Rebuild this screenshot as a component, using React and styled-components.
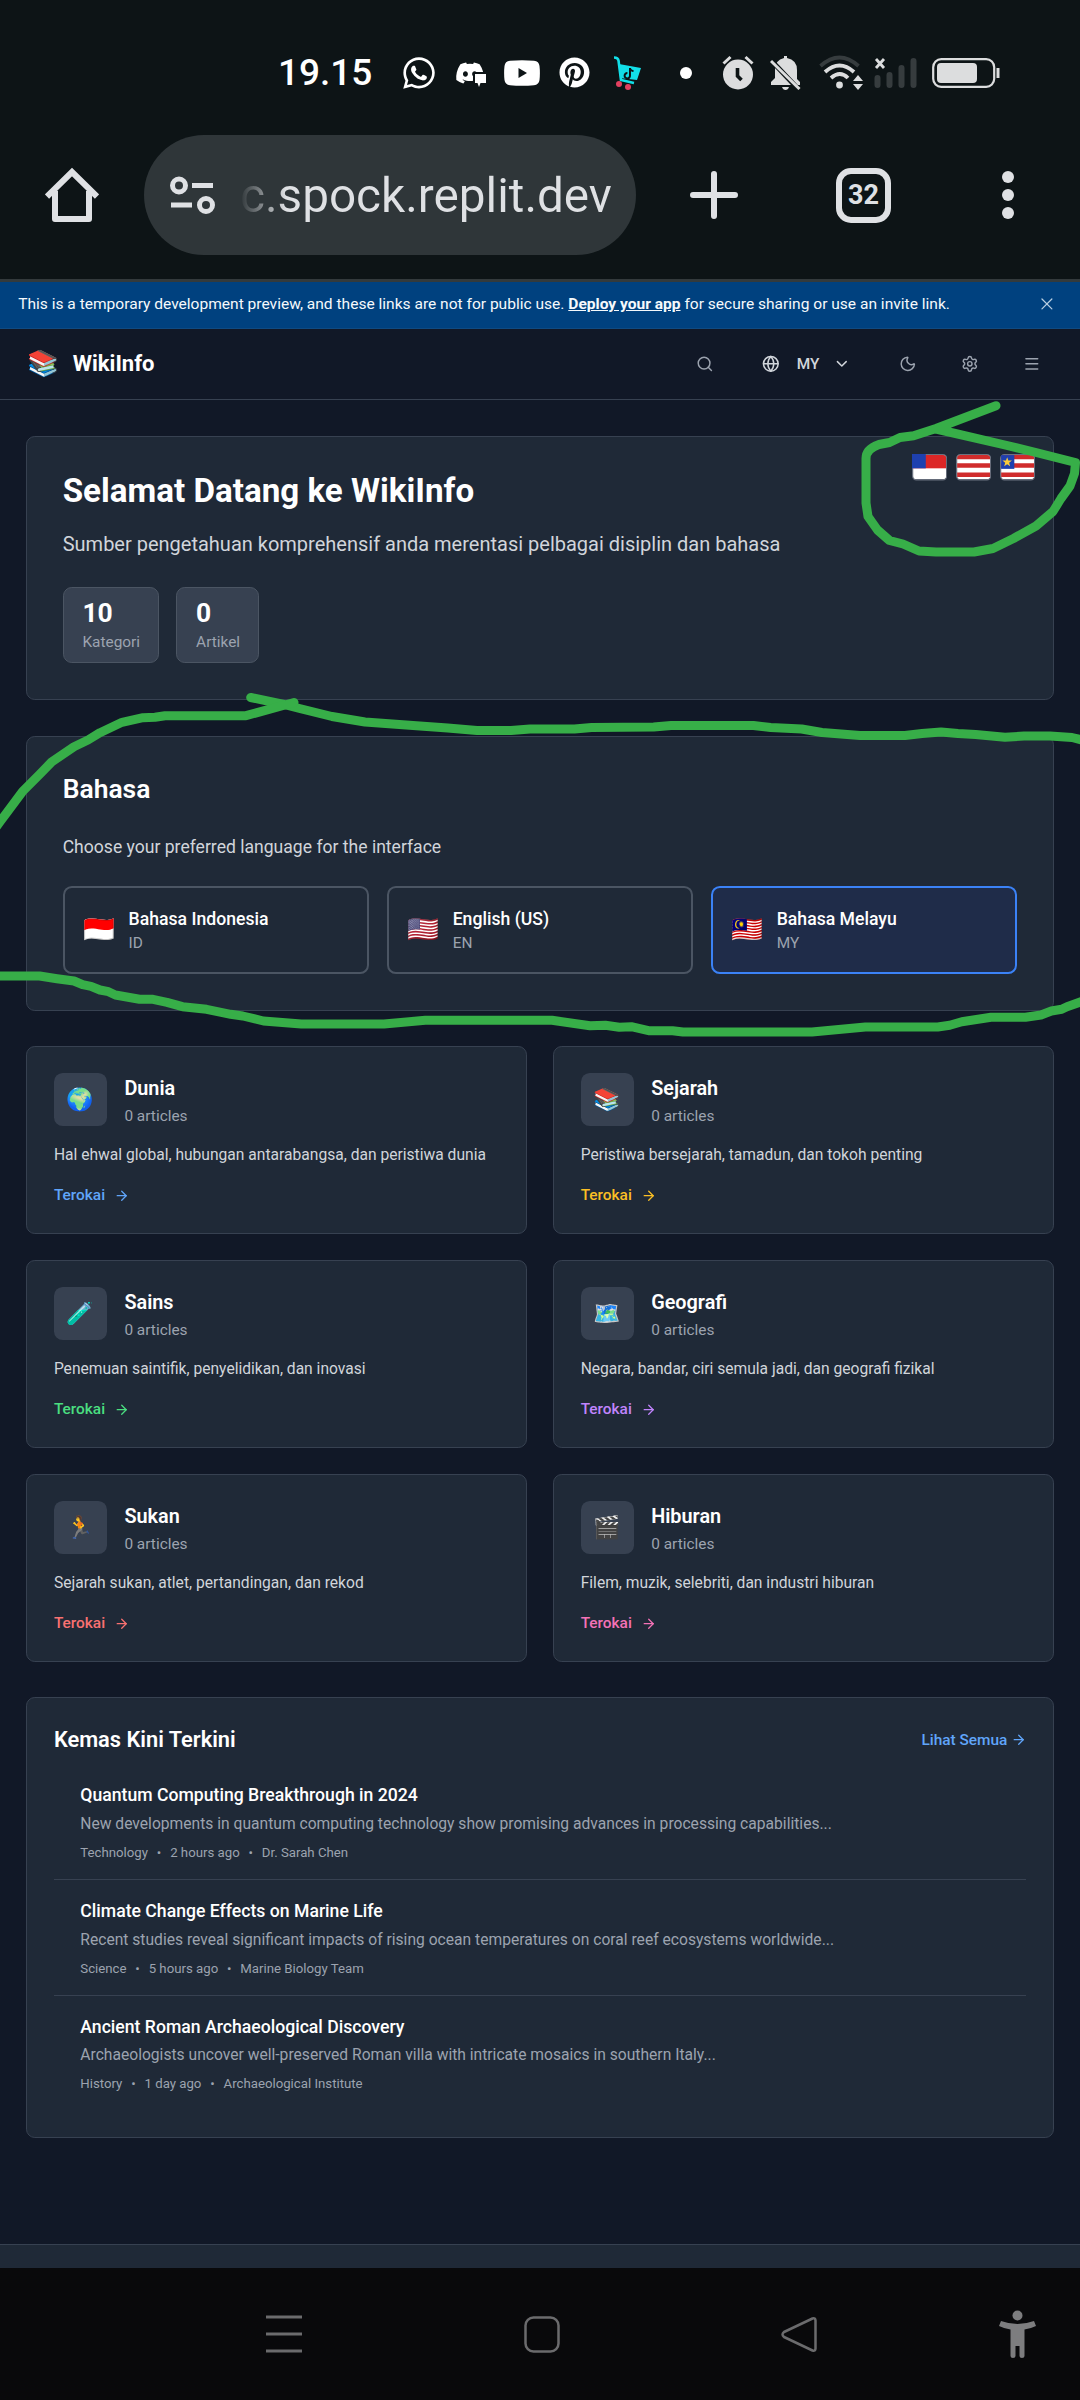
import React from 'react';
import styled, { createGlobalStyle, css } from 'styled-components';
import { ArrowRight, ChevronDown, Globe, Menu, Moon, Search, Settings, X } from 'lucide-react';
import { FaWhatsapp, FaPinterest, FaDiscord } from 'react-icons/fa';

const GlobalStyle = createGlobalStyle`
  *, *::before, *::after { box-sizing: border-box; }
  body { margin: 0; background: #111827; }
  h1, h2, h3, p { margin: 0; }
  svg { display: block; flex: none; }
`;

const Screen = styled.div`
  position: relative;
  display: flex;
  flex-direction: column;
  width: 1080px;
  height: 2400px;
  overflow: hidden;
  background: #111827;
  font-family: Roboto, 'Noto Sans', 'Noto Color Emoji', sans-serif;
`;

/* ---------- phone status bar ---------- */

const StatusBar = styled.div`
  display: flex;
  align-items: center;
  height: 135px;
  padding: 10px 80px 0 278px;
  background: #0d1416;
  color: #fff;
`;

const Clock = styled.span`
  width: 123px;
  font-size: 37px;
  font-weight: 500;
`;

const Spacer = styled.span`
  flex: none;
  width: ${(p) => p.$w}px;
`;

const Dot = styled.span`
  width: 12px;
  height: 12px;
  border-radius: 50%;
  background: #fff;
`;

/* ---------- browser toolbar ---------- */

const Toolbar = styled.div`
  display: flex;
  align-items: center;
  height: 144px;
  padding-bottom: 24px;
  padding-left: 45px;
  background: #0d1416;
`;

const AddressPill = styled.div`
  display: flex;
  align-items: center;
  width: 492px;
  height: 120px;
  margin: 0 54px 0 45px;
  padding-left: 26px;
  border-radius: 60px;
  background: #2f3639;
`;

const Address = styled.span`
  margin-left: 25px;
  padding-top: 2px;
  font-size: 47.700px;
  line-height: 60px;
  white-space: nowrap;
  color: transparent;
  background: linear-gradient(90deg, #2f3639 0, #dfe1e4 46px);
  background-clip: text;
  -webkit-background-clip: text;
`;

const TabCount = styled.div`
  display: flex;
  align-items: center;
  justify-content: center;
  width: 55px;
  height: 55px;
  margin: 0 111px 0 98px;
  border: 6px solid #dfe1e4;
  border-radius: 15px;
  color: #dfe1e4;
  font-size: 27px;
  font-weight: 700;
`;

const MoreDots = styled.div`
  display: flex;
  flex-direction: column;
  gap: 6px;

  i {
    width: 12px;
    height: 12px;
    border-radius: 50%;
    background: #dfe1e4;
  }
`;

/* ---------- web page ---------- */

const Viewport = styled.div`
  height: 1989px;
  overflow: hidden;
  border-top: 3px solid #333a3c;
`;

/* The page is laid out 980px wide and scaled to the 1080px window. */
const Page = styled.div`
  width: 980px;
  zoom: 1.102041;
  color: #fff;
  font-size: 14px;
  line-height: 20px;
`;

const Banner = styled.div`
  display: flex;
  align-items: center;
  justify-content: space-between;
  height: 42.700px;
  padding: 0 21px 2px 16.500px;
  border-bottom: 1px solid #0f4a82;
  background: #00417f;
  color: #f5f9fc;
  font-size: 14.120px;
  white-space: nowrap;

  b {
    font-weight: 700;
    text-decoration: underline;
  }

  svg {
    color: #b9cfe2;
  }
`;

const Header = styled.header`
  display: flex;
  align-items: center;
  justify-content: space-between;
  height: 64.800px;
  padding: 0 24px;
  border-bottom: 1px solid #374151;
`;

const Brand = styled.div`
  display: flex;
  align-items: center;
  gap: 12px;
  font-size: 20px;
  font-weight: 700;
`;

const Emoji = styled.span`
  display: flex;
  align-items: center;
  justify-content: center;
  width: 30px;
  font-family: 'Noto Color Emoji', sans-serif;
  font-size: ${(p) => p.$size || 23.200}px;
  font-weight: 400;
  line-height: 1;
`;

const Actions = styled.div`
  display: flex;
  align-items: center;
  gap: 16px;
  color: #9ca3af;
`;

const IconButton = styled.span`
  display: flex;
  align-items: center;
  justify-content: center;
  width: 40px;
  height: 40px;
`;

const LanguageButton = styled.span`
  display: flex;
  align-items: center;
  padding: 0 16px;
  color: #d1d5db;
  font-weight: 500;

  span {
    width: 48.500px;
    padding-left: 15.500px;
  }
`;

const Main = styled.main`
  display: flex;
  flex-direction: column;
  gap: 32px;
  padding: 32px 24px 96px;
`;

const panel = css`
  border: 1px solid #374151;
  border-radius: 8px;
  background: #1f2937;
`;

const Hero = styled.section`
  ${panel}
  position: relative;
  padding: 32px 32px 32.500px;

  h1 {
    font-size: 30.100px;
    line-height: 35px;
    font-weight: 700;
  }

  p {
    margin: 17px 0 24px;
    color: #d1d5db;
    font-size: 18.150px;
    line-height: 28px;
  }
`;

const HeroFlags = styled.div`
  position: absolute;
  top: 16px;
  right: 16px;
  display: flex;
  gap: 8px;
`;

const Stats = styled.div`
  display: flex;
  gap: 16px;
`;

const Stat = styled.div`
  padding: 8px 16px 9px 17px;
  border: 1px solid #4b5563;
  border-radius: 8px;
  background: #374151;
  color: #9ca3af;

  strong {
    display: block;
    color: #fff;
    font-size: 24px;
    line-height: 31px;
  }
`;

const LanguagePanel = styled.section`
  ${panel}
  padding: 32px 32px 32.300px;

  h2 {
    font-size: 24px;
    line-height: 31px;
    font-weight: 600;
  }

  > p {
    margin: 25px 0 24px;
    color: #d1d5db;
    font-size: 15.950px;
    line-height: 24px;
  }
`;

const LanguageGrid = styled.div`
  display: grid;
  grid-template-columns: repeat(3, 1fr);
  gap: 16px;
`;

const LanguageOption = styled.div`
  display: flex;
  align-items: center;
  gap: 12px;
  padding: 16px;
  border: 2px solid ${(p) => (p.$active ? '#3b82f6' : '#4b5563')};
  border-radius: 8px;
  background: ${(p) => (p.$active ? '#1f2c49' : 'transparent')};
  color: #9ca3af;

  strong {
    display: block;
    color: #fff;
    font-size: 16px;
    line-height: 24px;
    font-weight: 500;
  }
`;

const CategoryGrid = styled.section`
  display: grid;
  grid-template-columns: 1fr 1fr;
  gap: 24px;
`;

const Category = styled.article`
  ${panel}
  display: flex;
  flex-direction: column;
  gap: 16.300px;
  height: 170.200px;
  padding: 24px;

  > p {
    color: #d1d5db;
    font-size: 14.180px;
  }
`;

const CategoryHead = styled.div`
  display: flex;
  gap: 16px;
  height: 48px;
  color: #9ca3af;

  h3 {
    color: #fff;
    font-size: 18px;
    line-height: 29px;
    font-weight: 600;
  }
`;

const IconTile = styled.div`
  display: flex;
  align-items: center;
  justify-content: center;
  width: 48px;
  height: 48px;
  border-radius: 8px;
  background: #374151;
`;

const TextLink = styled.span`
  display: flex;
  align-items: center;
  gap: ${(p) => p.$gap}px;
  color: ${(p) => p.$color};
  font-weight: 500;
`;

const Updates = styled.section`
  ${panel}
  padding: 24.400px 24px;
`;

const UpdatesHead = styled.div`
  display: flex;
  align-items: center;
  justify-content: space-between;
  margin-bottom: 8px;

  h2 {
    font-size: 19.800px;
    line-height: 28px;
    font-weight: 600;
  }
`;

const UpdateItem = styled.article`
  padding: 16px 24px;
  color: #9ca3af;

  & + & {
    padding-top: 16.200px;
    border-top: 1px solid #374151;
  }

  h3 {
    color: #fff;
    font-size: 16px;
    line-height: 24px;
    font-weight: 500;
  }

  p {
    margin: 4px 0 8px;
    font-size: 14.200px;
  }
`;

const Meta = styled.div`
  display: flex;
  gap: 8px;
  font-size: 12px;
  line-height: 16px;
`;

const Footer = styled.footer`
  height: 60px;
  border-top: 1px solid #374151;
  background: #1f2937;
`;

/* ---------- system navigation ---------- */

const NavBar = styled.nav`
  display: flex;
  align-items: center;
  height: 132px;
  padding-left: 265px;
  background: #09090b;
  color: #6b6b6d;
`;

const Annotation = styled.svg`
  position: absolute;
  top: 0;
  left: 0;
  pointer-events: none;
`;

/* ---------- drawings ---------- */

const DiscordChat = () => (
  <svg width="32" height="30" viewBox="0 0 32 30">
    <FaDiscord x="0" y="0" size={30} color="#fff" />
    <path d="M18 14h14v13h-6l-2 4-2-4h-4z" fill="#0d1416" />
    <path d="M20 16h11v9h-5.500l-1.500 4-1.500-4h-2.500z" fill="#fff" />
  </svg>
);

const YouTubeIcon = () => (
  <svg width="36" height="26" viewBox="0 0 36 26">
    <path d="M6 .8Q18-.4 30 .8q5 .6 5.500 5.200.8 7 0 14-.5 4.600-5.500 5.200-12 1.200-24 0Q1 24.600.5 20-.3 13 .5 6 1 1.400 6 .8z" fill="#fff" />
    <path d="M14.500 8v10l8.500-5z" fill="#0d1416" />
  </svg>
);

const CartIcon = () => (
  <svg width="28" height="34" viewBox="0 0 28 34">
    <path d="M0 1.500q4 0 4.500 3L7 24l13 3" fill="none" stroke="#12dfe8" strokeWidth="2.600" />
    <path d="M5 8l22 4-4 12L6 22z" fill="#12dfe8" />
    <path d="M16 12v7.500a2.700 2.700 0 1 1-2.600-2.500M16 12.500q1 2.500 3.500 2.600" fill="none" stroke="#0d1416" strokeWidth="2" />
    <circle cx="5" cy="28" r="3" fill="#e2405f" />
    <circle cx="14" cy="31" r="3" fill="#e2405f" />
  </svg>
);

const AlarmIcon = () => (
  <svg width="32" height="35" viewBox="0 0 32 35">
    <circle cx="16" cy="19.500" r="15" fill="#dcddde" />
    <path d="M1.500 8.500l7-6.500M30.500 8.500l-7-6.500" stroke="#dcddde" strokeWidth="3" />
    <path d="M15.500 13v8l4 4" fill="none" stroke="#0d1416" strokeWidth="3.600" />
  </svg>
);

const BellOffIcon = () => (
  <svg width="32" height="34" viewBox="0 0 32 34">
    <path d="M14 0h3v2q10 2 10 12v9l3 3v3H1v-3l4-4v-8Q5 4 14 2z" fill="#dcddde" />
    <path d="M12 31h7q-1 3-3.500 3T12 31z" fill="#dcddde" />
    <path d="M-2 1l32 34" stroke="#0d1416" strokeWidth="5" />
    <path d="M1 5l28.500 28" stroke="#dcddde" strokeWidth="3" />
  </svg>
);

const WifiIcon = () => (
  <svg width="44" height="36" viewBox="0 0 44 36" fill="none" strokeWidth="3.800">
    <path d="M1.500 11q19-17 38 0" stroke="#363c3e" />
    <path d="M6 17q14.500-13 29 0M12 23q9-8 17 0" stroke="#dcddde" />
    <circle cx="20.500" cy="30" r="3.400" fill="#dcddde" />
    <path d="M34 26l5-6 5 6zM34 29l5 6 5-6z" fill="#dcddde" />
  </svg>
);

const SignalIcon = () => (
  <svg width="44" height="32" viewBox="0 0 44 32">
    <path d="M3.500 21v7M15.500 18v10M27.500 11v17M39.500 4v24" stroke="#363c3e" strokeWidth="6" strokeLinecap="round" />
    <path d="M2 2l8 9M10 2l-8 9" stroke="#dcddde" strokeWidth="2.800" />
  </svg>
);

const BatteryIcon = () => (
  <svg width="68" height="30" viewBox="0 0 68 30">
    <rect x="1.200" y="1.200" width="61" height="27.600" rx="8" fill="none" stroke="#dcddde" strokeWidth="2.200" />
    <rect x="5" y="5" width="40" height="20" rx="4" fill="#dcddde" />
    <path d="M66 10v10" stroke="#dcddde" strokeWidth="3" />
  </svg>
);

const HomeIcon = () => (
  <svg width="54" height="56" viewBox="0 0 54 56" fill="none" stroke="#dfe1e4" strokeWidth="6">
    <path d="M2 29.500L27 5l25 24.500" />
    <path d="M10 24v28h34V24" strokeLinejoin="round" />
  </svg>
);

const SiteInfoIcon = () => (
  <svg width="45" height="39" viewBox="0 0 45 39" fill="none" stroke="#dfe1e4" strokeWidth="5">
    <circle cx="9" cy="9.500" r="6.500" />
    <path d="M22 9.500h21M1 29h21" />
    <circle cx="36" cy="29" r="6.500" />
  </svg>
);

const PlusIcon = () => (
  <svg width="48" height="48" viewBox="0 0 48 48" stroke="#dfe1e4" strokeWidth="6" strokeLinecap="round">
    <path d="M24 3v42M3 24h42" />
  </svg>
);

const Star = () => <path d="M6.500 3l1.100 3h3.200L8.300 8l.9 3.200-2.700-1.900-2.700 1.900.9-3.200-2.500-2h3.200z" fill="#facc3a" />;

const FlagIcon = ({ kind }) => (
  <svg width="32" height="24" viewBox="0 0 32 24">
    <clipPath id={`flag-${kind}`}>
      <rect x="1" y="1" width="30" height="22" rx="2.500" />
    </clipPath>
    <g clipPath={`url(#flag-${kind})`}>
      <rect width="32" height="24" fill="#fff" />
      {kind === 'bicolor' ? (
        <rect width="32" height="13" fill="#dc2626" />
      ) : (
        <path d="M0 2.700h32M0 10.500h32M0 18.800h32" stroke="#d02c2c" strokeWidth="4" />
      )}
    </g>
    <rect x=".5" y=".5" width="31" height="23" rx="3.500" fill="none" stroke="#6b7280" />
    {kind === 'bicolor' && <rect x="0" y="0" width="12.500" height="13" fill="#1e40af" />}
    {kind === 'star' && <rect x="1" y="1" width="12" height="12.500" fill="#1e40af" />}
    {kind === 'star' && <Star />}
  </svg>
);

const Strokes = () => (
  <Annotation width="1080" height="2400" viewBox="0 0 1080 2400" fill="none" stroke="#37ae48" strokeWidth="9" strokeLinecap="round" strokeLinejoin="round">
    <path d="M996 405.700L936 428.500 913.600 435.700 900 437.500 889.500 442.500 879 444.500Q866 449 866 458.500V503L868 516.500 877.500 530 889.500 540.500 903 544 919 551 936 552H974L993 548.500 1013.500 538.500 1036 526 1053 511.500 1061 498.500 1070 486 1074.500 473.500 1075.500 462.500 1036 452.500 1005 445 936 429" />
    <path d="M250.700 697.500L284 704.500 299.600 708.500 332 716.500 365 722 413 725.500 447.700 728 477 730.500H511L530 729H574.500L591.600 727.500 653.600 727 671 725.500H753.500L770.700 727.500 801.700 729 822 732.500 860 735.500H905L922 733.500 941 732 958 733.500 975.600 734.500 1005 737.300 1024 736H1050L1072 737.500 1086 741" />
    <path d="M294 702.500L246 715.700H165L155 717.300 143 717.700 122 722.300 100 732.700 88 740 74 746.700 51.600 762 39.600 774.300 22.400 791.700 0 821.700-6 830" />
    <path d="M-6 976H39.600L57 978.700 74 981 82.600 984.700 91 986.300 100 990 108.500 991.700 115.400 995 139.500 999.300H153L167 1002.300 182.500 1006.700 206.600 1009.300 230.700 1014.300 242.800 1016 263.400 1021 301.300 1024H384L425.300 1020.300H552L590 1025.700 605.400 1025.300 619.200 1027.300 631.300 1026.700 648.500 1030.700H672.600L683 1032H812L865.400 1027H937.700L949.800 1025.300 961.800 1021.700 991 1017.300H1025.500L1041 1015 1051.400 1011 1061.700 1009.300 1067 1006.700 1086 1000" />
  </Annotation>
);

/* ---------- data ---------- */

const languages = [
  { flag: '🇮🇩', name: 'Bahasa Indonesia', code: 'ID' },
  { flag: '🇺🇸', name: 'English (US)', code: 'EN' },
  { flag: '🇲🇾', name: 'Bahasa Melayu', code: 'MY', active: true },
];

const categories = [
  { icon: '🌍', name: 'Dunia', text: 'Hal ehwal global, hubungan antarabangsa, dan peristiwa dunia', color: '#60a5fa' },
  { icon: '📚', name: 'Sejarah', text: 'Peristiwa bersejarah, tamadun, dan tokoh penting', color: '#fbbf24' },
  { icon: '🧪', name: 'Sains', text: 'Penemuan saintifik, penyelidikan, dan inovasi', color: '#4ade80' },
  { icon: '🗺️', name: 'Geografi', text: 'Negara, bandar, ciri semula jadi, dan geografi fizikal', color: '#c084fc' },
  { icon: '🏃', name: 'Sukan', text: 'Sejarah sukan, atlet, pertandingan, dan rekod', color: '#f87171' },
  { icon: '🎬', name: 'Hiburan', text: 'Filem, muzik, selebriti, dan industri hiburan', color: '#f472b6' },
];

const updates = [
  {
    title: 'Quantum Computing Breakthrough in 2024',
    text: 'New developments in quantum computing technology show promising advances in processing capabilities...',
    meta: ['Technology', '2 hours ago', 'Dr. Sarah Chen'],
  },
  {
    title: 'Climate Change Effects on Marine Life',
    text: 'Recent studies reveal significant impacts of rising ocean temperatures on coral reef ecosystems worldwide...',
    meta: ['Science', '5 hours ago', 'Marine Biology Team'],
  },
  {
    title: 'Ancient Roman Archaeological Discovery',
    text: 'Archaeologists uncover well-preserved Roman villa with intricate mosaics in southern Italy...',
    meta: ['History', '1 day ago', 'Archaeological Institute'],
  },
];

export default function App() {
  return (
    <Screen>
      <GlobalStyle />
      <StatusBar>
        <Clock>19.15</Clock>
        <FaWhatsapp size={36} />
        <Spacer $w={18} />
        <DiscordChat />
        <Spacer $w={17} />
        <YouTubeIcon />
        <Spacer $w={19} />
        <FaPinterest size={31} />
        <Spacer $w={24} />
        <CartIcon />
        <Spacer $w={38} />
        <Dot />
        <Spacer $w={30} />
        <AlarmIcon />
        <Spacer $w={16} />
        <BellOffIcon />
        <Spacer $w={17} />
        <WifiIcon />
        <Spacer $w={11} />
        <SignalIcon />
        <Spacer $w={14} />
        <BatteryIcon />
      </StatusBar>
      <Toolbar>
        <HomeIcon />
        <AddressPill>
          <SiteInfoIcon />
          <Address>c.spock.replit.dev</Address>
        </AddressPill>
        <PlusIcon />
        <TabCount>32</TabCount>
        <MoreDots><i /><i /><i /></MoreDots>
      </Toolbar>
      <Viewport>
        <Page>
          <Banner>
            <span>
              This is a temporary development preview, and these links are not for public use. <b>Deploy your app</b> for secure sharing or use an invite link.
            </span>
            <X size={18} strokeWidth={1.5} />
          </Banner>
          <Header>
            <Brand>
              <Emoji>📚</Emoji>
              WikiInfo
            </Brand>
            <Actions>
              <IconButton><Search size={16} /></IconButton>
              <LanguageButton>
                <Globe size={16} />
                <span>MY</span>
                <ChevronDown size={16} />
              </LanguageButton>
              <IconButton><Moon size={16} /></IconButton>
              <IconButton><Settings size={16} /></IconButton>
              <IconButton><Menu size={16} /></IconButton>
            </Actions>
          </Header>
          <Main>
            <Hero>
              <h1>Selamat Datang ke WikiInfo</h1>
              <p>Sumber pengetahuan komprehensif anda merentasi pelbagai disiplin dan bahasa</p>
              <Stats>
                <Stat><strong>10</strong>Kategori</Stat>
                <Stat><strong>0</strong>Artikel</Stat>
              </Stats>
              <HeroFlags>
                <FlagIcon kind="bicolor" />
                <FlagIcon kind="stripes" />
                <FlagIcon kind="star" />
              </HeroFlags>
            </Hero>
            <LanguagePanel>
              <h2>Bahasa</h2>
              <p>Choose your preferred language for the interface</p>
              <LanguageGrid>
                {languages.map((l) => (
                  <LanguageOption key={l.code} $active={l.active}>
                    <Emoji>{l.flag}</Emoji>
                    <div><strong>{l.name}</strong>{l.code}</div>
                  </LanguageOption>
                ))}
              </LanguageGrid>
            </LanguagePanel>
            <CategoryGrid>
              {categories.map((c) => (
                <Category key={c.name}>
                  <CategoryHead>
                    <IconTile><Emoji $size={20}>{c.icon}</Emoji></IconTile>
                    <div><h3>{c.name}</h3>0 articles</div>
                  </CategoryHead>
                  <p>{c.text}</p>
                  <TextLink $gap={8} $color={c.color}>Terokai<ArrowRight size={14} /></TextLink>
                </Category>
              ))}
            </CategoryGrid>
            <Updates>
              <UpdatesHead>
                <h2>Kemas Kini Terkini</h2>
                <TextLink $gap={3} $color="#60a5fa">Lihat Semua<ArrowRight size={14} /></TextLink>
              </UpdatesHead>
              {updates.map((u) => (
                <UpdateItem key={u.title}>
                  <h3>{u.title}</h3>
                  <p>{u.text}</p>
                  <Meta>
                    <span>{u.meta[0]}</span><span>•</span><span>{u.meta[1]}</span><span>•</span><span>{u.meta[2]}</span>
                  </Meta>
                </UpdateItem>
              ))}
            </Updates>
          </Main>
          <Footer />
        </Page>
      </Viewport>
      <NavBar>
        <svg width="37" height="38" viewBox="0 0 37 38" stroke="currentColor" strokeWidth="3">
          <path d="M1 2h36M1 19h36M1 36h36" />
        </svg>
        <Spacer $w={222} />
        <svg width="36" height="37" viewBox="0 0 36 37" fill="none" stroke="currentColor" strokeWidth="2.500">
          <rect x="1.500" y="1.500" width="33" height="34" rx="8" />
        </svg>
        <Spacer $w={221} />
        <svg width="37" height="37" viewBox="0 0 37 37" fill="none" stroke="currentColor" strokeWidth="2.500" strokeLinejoin="round">
          <path d="M31.500 2.500L3 16q-3 2.500 0 5l28.500 13.500q3 .8 3-2V4.500q0-2.800-3-2z" />
        </svg>
        <Spacer $w={181} />
        <svg width="37" height="48" viewBox="0 0 37 48" fill="#7d7d7f">
          <circle cx="18.500" cy="5.500" r="5" />
          <path d="M2 11q16.500 6 33 0l2 5q-5 2.500-11.500 3.500V46q0 2-2.500 2t-2.500-2V36h-4v10q0 2-2.500 2T11.500 46V19.500Q5 18.500 0 16z" />
        </svg>
      </NavBar>
      <Strokes />
    </Screen>
  );
}
